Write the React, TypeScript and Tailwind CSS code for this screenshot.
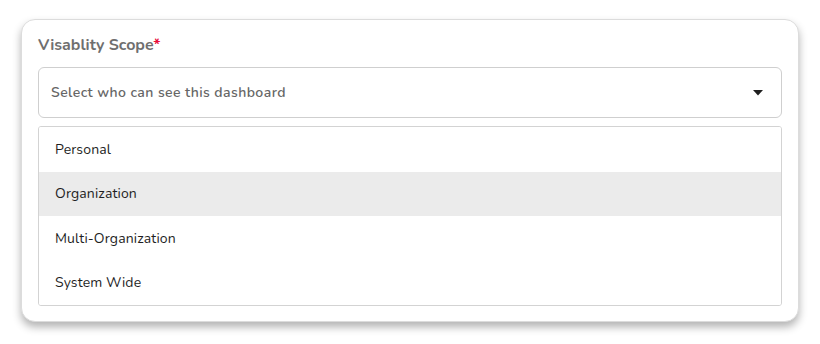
import React from "react";

const items = ["Personal", "Organization", "Multi-Organization", "System Wide"];

export default function App() {
  return (
    <div
      className="w-[820px] h-[344px] bg-white pl-[21px] pt-[19px]"
      style={{ fontFamily: '"Nunito", Lato, "Noto Sans", sans-serif' }}
    >
      <div className="w-[778px] rounded-[14px] border border-[#dcdcdc] bg-white shadow-[0_5px_8px_rgba(0,0,0,0.3)] px-[16px] pt-[13px] pb-[15px]">
        <div className="text-[16px] leading-[24px] font-bold text-[#6f6f6f]">
          Visablity Scope<span className="text-[#e8103c]">*</span>
        </div>
        <div className="mt-[10px] h-[51px] rounded-[6px] border border-[#cfcfcf] flex items-center justify-between pl-[12px] pr-[18px]">
          <span className="text-[14px] tracking-[0.03em] font-semibold text-[#666666]">Select who can see this dashboard</span>
          <svg width="10" height="6" viewBox="0 0 10 6">
            <path d="M0 0 L10 0 L5 5.5 Z" fill="#1f1f1f" />
          </svg>
        </div>
        <div className="mt-[8px] border border-[#d3d3d3] rounded-[3px] overflow-hidden">
          {items.map((t, i) => (
            <div
              key={t}
              className={`h-[44.5px] flex items-center pl-[16px] text-[14px] tracking-[0.01em] text-[#1f1f1f] ${i === 1 ? "bg-[#ebebeb]" : "bg-white"}`}
            >
              {t}
            </div>
          ))}
        </div>
      </div>
    </div>
  );
}
